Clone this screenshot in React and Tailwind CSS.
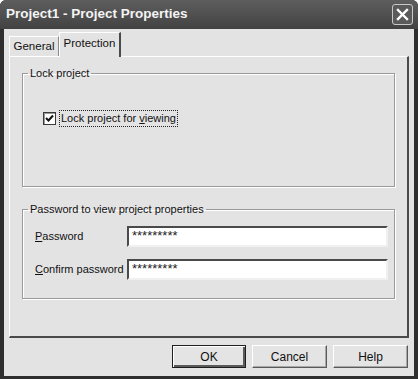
import React from 'react';

const font = { fontFamily: '"Liberation Sans", Arial, sans-serif' };

const Raised = 'border border-t-white border-l-white border-r-[#5a5a5a] border-b-[#5a5a5a] shadow-[inset_-1px_-1px_0_#a8a8a8]';

const Field = ({ accel, rest }) => (
  <div className="flex h-[21px] items-center">
    <span className="w-[92px] whitespace-nowrap text-[11px] text-[#111]">
      <span className="underline">{accel}</span>
      {rest}
    </span>
    <div className="h-[21px] w-[261px] border-2 border-t-[#4a4a4a] border-l-[#4a4a4a] border-r-[#f0f0f0] border-b-[#f0f0f0] bg-white pl-[3px] pt-[1px] text-[13px] leading-[13px] text-[#222]">
      *********
    </div>
  </div>
);

const Button = ({ children, primary }) => (
  <div
    className={
      'flex h-[23px] items-center justify-center bg-[#e4e4e4] text-[12px] text-[#111] ' +
      (primary
        ? 'w-[74px] border border-[#1e1e1e] shadow-[inset_1px_1px_0_#fff,inset_-2px_-2px_0_#5a5a5a]'
        : 'w-[75px] ' + Raised)
    }
  >
    {children}
  </div>
);

export default function App() {
  return (
    <div className="h-[379px] w-[418px] overflow-hidden rounded-t-[6px] bg-[#2e2e2e]" style={font}>
      <div className="flex h-[29px] items-center justify-between bg-gradient-to-b from-[#5e5e5e] to-[#424242] pl-[6px] pr-[5px]">
        <span className="text-[13.5px] font-bold text-[#f4f4f4]">Project1 - Project Properties</span>
        <div className="flex h-[21px] w-[21px] items-center justify-center rounded-[3px] border border-[#c8c8c8] bg-[#5a5a5a]">
          <svg width="13" height="13" viewBox="0 0 13 13">
            <path d="M2 2 L11 11 M11 2 L2 11" stroke="#fff" strokeWidth="2.4" strokeLinecap="square" />
          </svg>
        </div>
      </div>

      <div className="mx-[4px] flex h-[347px] flex-col bg-[#e3e3e3] px-[5px] pt-[3px]">
        <div className="flex h-[24px] items-end">
          <div className="flex h-[20px] w-[50px] items-center justify-center border-l border-t border-white border-r border-r-[#8a8a8a] text-[11.5px] text-[#111]">
            General
          </div>
          <div className="relative z-10 -mb-px flex h-[25px] w-[62px] items-center justify-center border-l border-t border-white border-r-2 border-r-[#4a4a4a] bg-[#e3e3e3] pb-[3px] text-[11.5px] text-[#111]">
            Protection
          </div>
        </div>

        <div className="flex h-[282px] w-[400px] flex-col border border-t-white border-l-white border-r-2 border-r-[#4a4a4a] border-b-2 border-b-[#4a4a4a] px-[12px] pt-[9px]">
          <fieldset className="h-[121px] w-[373px] border border-[#9a9a9a] shadow-[inset_1px_1px_0_#fff,1px_1px_0_#fff]">
            <legend className="ml-[5px] px-[2px] text-[11px] leading-[14px] text-[#111]">Lock project</legend>
            <div className="ml-[20px] mt-[30px] flex items-center">
              <div className="flex h-[13px] w-[13px] items-center justify-center border border-[#3a3a3a] bg-white shadow-[inset_1px_1px_0_#9a9a9a]">
                <svg width="9" height="9" viewBox="0 0 9 9">
                  <path d="M1 4 L3.5 6.5 L8 1.5" fill="none" stroke="#111" strokeWidth="2" />
                </svg>
              </div>
              <div className="ml-[3px] border border-dotted border-[#222] px-[1px] text-[11px] leading-[15px] text-[#111]">
                Lock project for <span className="underline">v</span>iewing
              </div>
            </div>
          </fieldset>

          <fieldset className="mt-[15px] h-[97px] w-[373px] border border-[#9a9a9a] shadow-[inset_1px_1px_0_#fff,1px_1px_0_#fff]">
            <legend className="ml-[5px] px-[2px] text-[11px] leading-[14px] text-[#111]">
              Password to view project properties
            </legend>
            <div className="ml-[12px] mt-[10px] flex flex-col gap-[12px]">
              <Field accel="P" rest="assword" />
              <Field accel="C" rest="onfirm password" />
            </div>
          </fieldset>
        </div>

        <div className="mt-[7px] flex justify-end gap-[6px] pr-[1px]">
          <Button primary>OK</Button>
          <Button>Cancel</Button>
          <Button>Help</Button>
        </div>
      </div>
    </div>
  );
}
